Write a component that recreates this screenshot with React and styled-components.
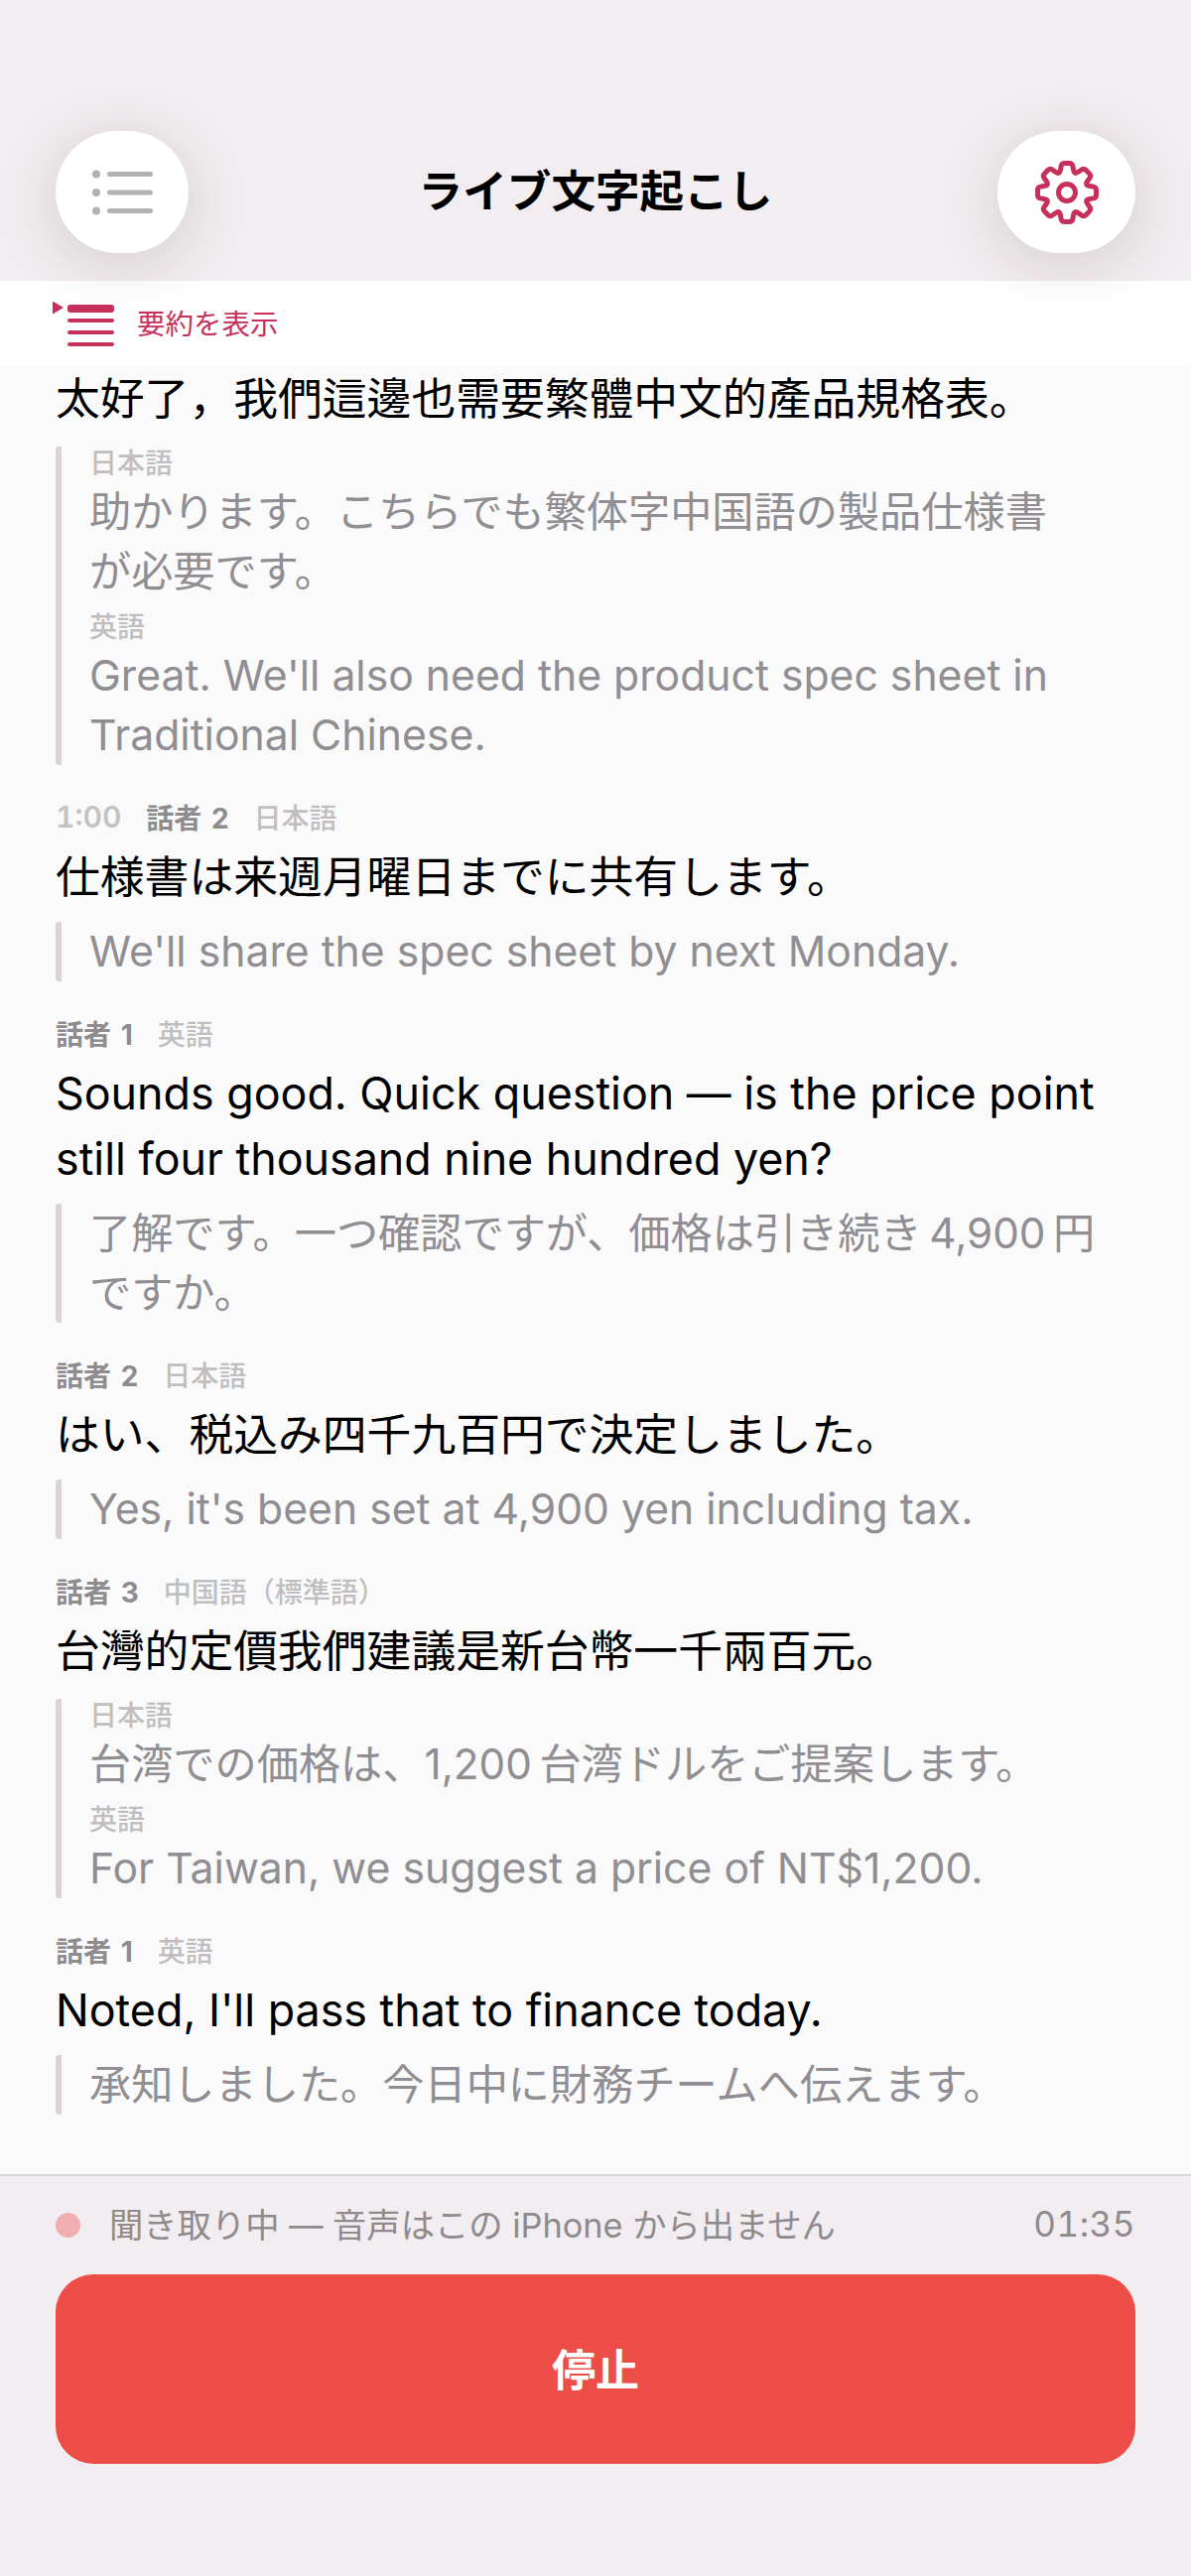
import React from "react";
import styled, { createGlobalStyle } from "styled-components";

const GlobalStyle = createGlobalStyle`
  html, body {
    margin: 0;
    padding: 0;
    background: #f2edf0;
  }
  * { box-sizing: border-box; }
`;

const Page = styled.div`
  width: 1200px;
  height: 2596px;
  display: flex;
  flex-direction: column;
  overflow: hidden;
  font-family: Inter, "Noto Sans CJK JP", sans-serif;
  background: #f2edf0;
`;

const Header = styled.header`
  position: relative;
  z-index: 2;
  height: 283px;
  padding: 132px 56px 0;
  display: grid;
  grid-template-columns: 1fr auto 1fr;
  align-items: start;
`;

const RoundButton = styled.button`
  width: ${(p) => p.$w}px;
  height: 123px;
  border: 0;
  padding: 0;
  border-radius: 62px;
  background: #fff;
  box-shadow: 0 10px 60px rgba(60, 40, 50, 0.17);
  display: flex;
  align-items: center;
  justify-content: center;
  justify-self: ${(p) => p.$side};
`;

const Title = styled.h1`
  margin: 0;
  height: 123px;
  line-height: 123px;
  font-size: 44.6px;
  font-weight: 700;
  color: #000;
`;

const SummaryBar = styled.div`
  height: 85px;
  background: #fff;
  padding: 0 0 0 53px;
  display: flex;
  align-items: center;
  gap: 23px;
`;

const SummaryLabel = styled.span`
  margin-bottom: 3px;
  font-size: 28.5px;
  color: #c7305a;
`;

const List = styled.main`
  flex: 1;
  background: #fafafa;
  border-bottom: 2px solid #d9d4d8;
  padding: 1px 56px 0;
  overflow: hidden;
`;

const Row = styled.section`
  margin-bottom: 36px;
`;

const Meta = styled.div`
  height: 40px;
  margin-bottom: 8px;
  display: flex;
  align-items: center;
  gap: 25px;
  font-size: 28px;
  word-spacing: 3px;
`;

const Time = styled.span`
  color: #c4c2c4;
  font-size: 30px;
  font-weight: 600;
  font-variant-numeric: tabular-nums;
`;

const Speaker = styled.span`
  color: #8e8c8e;
  font-weight: 700;
`;

const Lang = styled.span`
  color: #c0bec0;
  font-weight: 500;
`;

const Original = styled.p`
  margin: 0 0 15px;
  font-size: 44.8px;
  line-height: 66px;
  color: #000;
`;

const Translations = styled.div`
  border-left: 6px solid #dcd2da;
  border-radius: 3px;
  padding-left: 28px;
`;

const TranslationBlock = styled.div`
  & + & {
    margin-top: 13px;
  }
`;

const TranslationLabel = styled.div`
  font-size: 28px;
  line-height: 34px;
  margin-bottom: 5px;
  font-weight: 500;
  color: #c0bec0;
`;

const TranslationText = styled.p`
  margin: -3px 0 -4px;
  font-size: ${(p) => (p.$latin ? 42.7 : 42.2)}px;
  line-height: 60px;
  white-space: pre-line;
  color: #908e92;
`;

const Footer = styled.footer`
  height: 403px;
  padding: 0 56px;
`;

const Status = styled.div`
  height: 99px;
  display: flex;
  align-items: center;
`;

const Dot = styled.span`
  width: 25px;
  height: 25px;
  border-radius: 50%;
  background: #f0aeb1;
  margin-right: 29px;
`;

const StatusText = styled.span`
  flex: 1;
  margin-bottom: 5px;
  font-size: 34.3px;
  color: #8e8a8e;
`;

const Timer = styled.span`
  margin-bottom: 3px;
  font-size: 35px;
  font-variant-numeric: tabular-nums;
  letter-spacing: 0.5px;
  color: #8e8a8e;
`;

const StopButton = styled.button`
  width: 100%;
  height: 191px;
  border: 0;
  border-radius: 38px;
  padding: 0 0 3px;
  background: #ec4d47;
  color: #fff;
  font-family: inherit;
  font-size: 44px;
  font-weight: 700;
`;

const rows = [
  {
    text: "太好了\uFF0C我們這邊也需要繁體中文的產品規格表。",
    translations: [
      { label: "日本語", text: "助かります。こちらでも繁体字中国語の製品仕様書\nが必要です。" },
      { label: "英語", latin: true, text: "Great. We'll also need the product spec sheet in\nTraditional Chinese." },
    ],
  },
  {
    time: "1:00",
    speaker: "話者 2",
    lang: "日本語",
    text: "仕様書は来週月曜日までに共有します。",
    translations: [{ latin: true, text: "We'll share the spec sheet by next Monday." }],
  },
  {
    speaker: "話者 1",
    lang: "英語",
    text: "Sounds good. Quick question — is the price point still four thousand nine hundred yen?",
    translations: [{ text: "了解です。一つ確認ですが、価格は引き続き\u20094,900\u2009円\nですか。" }],
  },
  {
    speaker: "話者 2",
    lang: "日本語",
    text: "はい、税込み四千九百円で決定しました。",
    translations: [{ latin: true, text: "Yes, it's been set at 4,900 yen including tax." }],
  },
  {
    speaker: "話者 3",
    lang: "中国語\uFF08標準語\uFF09",
    text: "台灣的定價我們建議是新台幣一千兩百元。",
    translations: [
      { label: "日本語", text: "台湾での価格は、1,200\u2009台湾ドルをご提案します。" },
      { label: "英語", latin: true, text: "For Taiwan, we suggest a price of NT$1,200." },
    ],
  },
  {
    speaker: "話者 1",
    lang: "英語",
    text: "Noted, I'll pass that to finance today.",
    translations: [{ text: "承知しました。今日中に財務チームへ伝えます。" }],
  },
];

// gear outline: 8 flat teeth, corners rounded with a quadratic through each vertex
const gearPath = () => {
  const pts = [];
  for (let i = 0; i < 8; i++) {
    const a = (i * Math.PI) / 4 - Math.PI / 2;
    [
      [21.5, -0.33],
      [30, -0.18],
      [30, 0.18],
      [21.5, 0.33],
    ].forEach(([r, o]) => pts.push([40 + r * Math.cos(a + o), 40 + r * Math.sin(a + o)]));
  }
  const mix = (p, q, t) => [p[0] + (q[0] - p[0]) * t, p[1] + (q[1] - p[1]) * t];
  let d = "";
  pts.forEach((p, i) => {
    const prev = pts[(i + pts.length - 1) % pts.length];
    const next = pts[(i + 1) % pts.length];
    const a = mix(p, prev, 0.3);
    const b = mix(p, next, 0.3);
    d += `${i ? "L" : "M"}${a[0].toFixed(2)} ${a[1].toFixed(2)}Q${p[0].toFixed(2)} ${p[1].toFixed(2)} ${b[0].toFixed(2)} ${b[1].toFixed(2)}`;
  });
  return d + "Z";
};

const ListIcon = () => (
  <svg width="61" height="46" viewBox="0 0 61 46" fill="#b3b1b3">
    <circle cx="4" cy="4.500" r="4" />
    <circle cx="4" cy="23" r="4" />
    <circle cx="4" cy="41.500" r="4" />
    <rect x="15" y="2" width="46" height="5" rx="2.500" />
    <rect x="15" y="20.500" width="46" height="5" rx="2.500" />
    <rect x="15" y="39" width="46" height="5" rx="2.500" />
  </svg>
);

const GearIcon = () => (
  <svg width="80" height="80" viewBox="0 0 80 80" fill="none" stroke="#c7305a" strokeWidth="5" strokeLinejoin="round">
    <path d={gearPath()} />
    <circle cx="40" cy="40" r="8.500" />
  </svg>
);

const SummaryIcon = () => (
  <svg width="62" height="56" viewBox="0 0 62 56" fill="#c7305a">
    <path d="M0 5.500l11 6.500-11 6.500z" />
    <rect x="15" y="9" width="47" height="8" rx="3" />
    <rect x="15" y="23" width="47" height="4" rx="2" />
    <rect x="15" y="35" width="47" height="4" rx="2" />
    <rect x="15" y="47" width="47" height="4" rx="2" />
  </svg>
);

const App = () => (
  <Page lang="ja">
    <GlobalStyle />
    <Header>
      <RoundButton $w={134} $side="start">
        <ListIcon />
      </RoundButton>
      <Title>ライブ文字起こし</Title>
      <RoundButton $w={139} $side="end">
        <GearIcon />
      </RoundButton>
    </Header>
    <SummaryBar>
      <SummaryIcon />
      <SummaryLabel>要約を表示</SummaryLabel>
    </SummaryBar>
    <List>
      {rows.map((row) => (
        <Row key={row.text}>
          {row.speaker && (
            <Meta>
              {row.time && <Time>{row.time}</Time>}
              <Speaker>{row.speaker}</Speaker>
              <Lang>{row.lang}</Lang>
            </Meta>
          )}
          <Original>{row.text}</Original>
          <Translations>
            {row.translations.map((t) => (
              <TranslationBlock key={t.text}>
                {t.label && <TranslationLabel>{t.label}</TranslationLabel>}
                <TranslationText $latin={t.latin}>{t.text}</TranslationText>
              </TranslationBlock>
            ))}
          </Translations>
        </Row>
      ))}
    </List>
    <Footer>
      <Status>
        <Dot />
        <StatusText>聞き取り中 — 音声はこの iPhone から出ません</StatusText>
        <Timer>01:35</Timer>
      </Status>
      <StopButton>停止</StopButton>
    </Footer>
  </Page>
);

export default App;
